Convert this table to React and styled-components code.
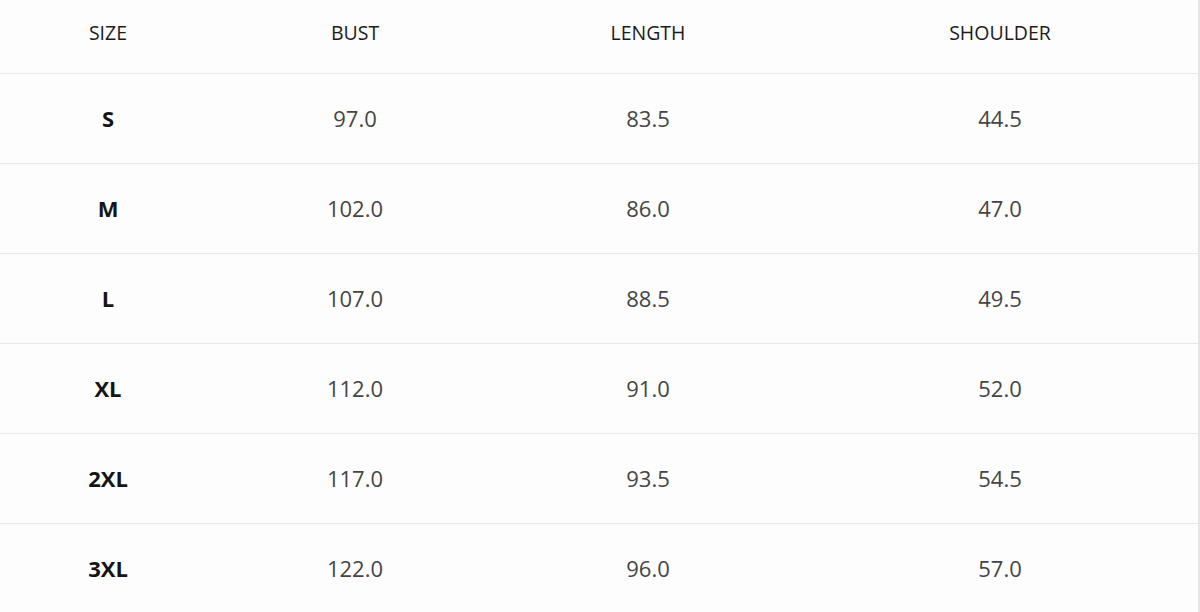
import React from "react";
import styled, { createGlobalStyle } from "styled-components";

const Global = createGlobalStyle`
  html, body { margin: 0; padding: 0; background: #fdfdfd; }
  body { font-family: "Open Sans", "Noto Sans", sans-serif; }
`;

const Table = styled.div`
  width: 1200px;
  height: 612px;
  overflow: hidden;
  box-sizing: border-box;
  border-right: 2px solid #e6e6e6;
  display: grid;
  grid-template-columns: 216px 278px 308px 1fr;
  grid-template-rows: 74px repeat(6, 90px);
`;

const Cell = styled.div`
  display: flex;
  align-items: center;
  justify-content: center;
  border-bottom: ${(p) => (p.$last ? "none" : "1.5px solid #e8e8e8")};
  box-sizing: border-box;
  font-size: ${(p) => (p.$head ? "19.5px" : "22px")};
  font-weight: ${(p) => (p.$bold ? 700 : p.$head ? 500 : 400)};
  color: ${(p) => (p.$head ? "#1c1c1c" : p.$bold ? "#151515" : "#454545")};
  padding-bottom: ${(p) => (p.$head ? "9px" : "2px")};
`;

const headers = ["SIZE", "BUST", "LENGTH", "SHOULDER"];
const rows = [
  ["S", "97.0", "83.5", "44.5"],
  ["M", "102.0", "86.0", "47.0"],
  ["L", "107.0", "88.5", "49.5"],
  ["XL", "112.0", "91.0", "52.0"],
  ["2XL", "117.0", "93.5", "54.5"],
  ["3XL", "122.0", "96.0", "57.0"],
];

export default function App() {
  return (
    <>
      <Global />
      <Table>
        {headers.map((h) => (
          <Cell key={h} $head>
            {h}
          </Cell>
        ))}
        {rows.map((r, i) =>
          r.map((v, j) => (
            <Cell key={`${i}-${j}`} $bold={j === 0} $last={i === rows.length - 1}>
              {v}
            </Cell>
          ))
        )}
      </Table>
    </>
  );
}
